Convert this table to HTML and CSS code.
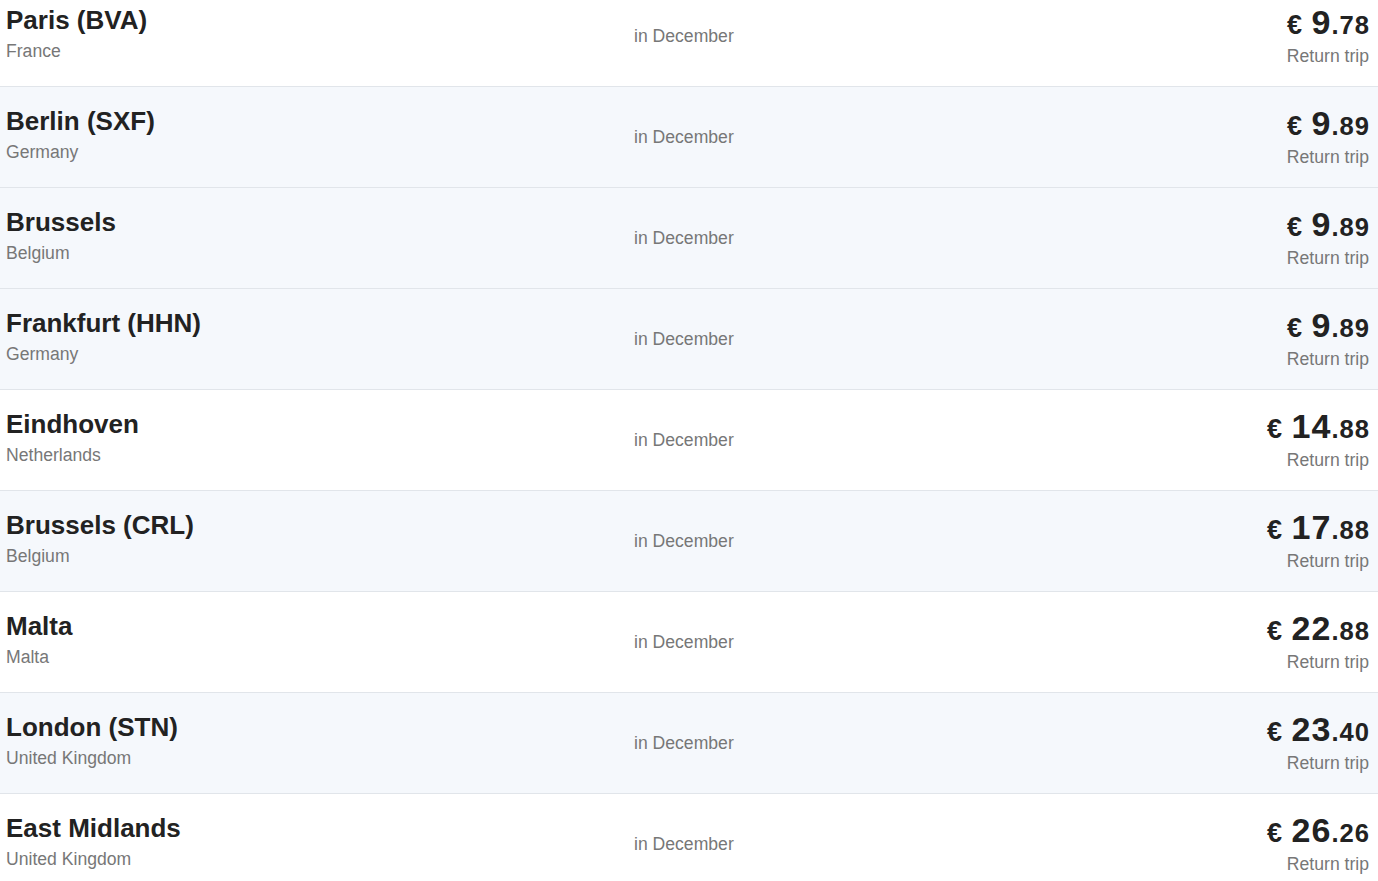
FILE: index.html
```html
<!DOCTYPE html>
<html lang="en">
<head>
<meta charset="utf-8">
<title>Cheap flights</title>
<link rel="stylesheet" href="styles.css">
</head>
<body>
<ul class="list">
  <li class="row">
    <div class="dest"><div class="city">Paris (BVA)</div><div class="country">France</div></div>
    <div class="when">in December</div>
    <div class="fare"><div class="price"><span class="cur">€ </span><span class="int">9</span><span class="dec">.78</span></div><div class="trip">Return trip</div></div>
  </li>
  <li class="row alt">
    <div class="dest"><div class="city">Berlin (SXF)</div><div class="country">Germany</div></div>
    <div class="when">in December</div>
    <div class="fare"><div class="price"><span class="cur">€ </span><span class="int">9</span><span class="dec">.89</span></div><div class="trip">Return trip</div></div>
  </li>
  <li class="row alt">
    <div class="dest"><div class="city">Brussels</div><div class="country">Belgium</div></div>
    <div class="when">in December</div>
    <div class="fare"><div class="price"><span class="cur">€ </span><span class="int">9</span><span class="dec">.89</span></div><div class="trip">Return trip</div></div>
  </li>
  <li class="row alt">
    <div class="dest"><div class="city">Frankfurt (HHN)</div><div class="country">Germany</div></div>
    <div class="when">in December</div>
    <div class="fare"><div class="price"><span class="cur">€ </span><span class="int">9</span><span class="dec">.89</span></div><div class="trip">Return trip</div></div>
  </li>
  <li class="row">
    <div class="dest"><div class="city">Eindhoven</div><div class="country">Netherlands</div></div>
    <div class="when">in December</div>
    <div class="fare"><div class="price"><span class="cur">€ </span><span class="int">14</span><span class="dec">.88</span></div><div class="trip">Return trip</div></div>
  </li>
  <li class="row alt">
    <div class="dest"><div class="city">Brussels (CRL)</div><div class="country">Belgium</div></div>
    <div class="when">in December</div>
    <div class="fare"><div class="price"><span class="cur">€ </span><span class="int">17</span><span class="dec">.88</span></div><div class="trip">Return trip</div></div>
  </li>
  <li class="row">
    <div class="dest"><div class="city">Malta</div><div class="country">Malta</div></div>
    <div class="when">in December</div>
    <div class="fare"><div class="price"><span class="cur">€ </span><span class="int">22</span><span class="dec">.88</span></div><div class="trip">Return trip</div></div>
  </li>
  <li class="row alt">
    <div class="dest"><div class="city">London (STN)</div><div class="country">United Kingdom</div></div>
    <div class="when">in December</div>
    <div class="fare"><div class="price"><span class="cur">€ </span><span class="int">23</span><span class="dec">.40</span></div><div class="trip">Return trip</div></div>
  </li>
  <li class="row">
    <div class="dest"><div class="city">East Midlands</div><div class="country">United Kingdom</div></div>
    <div class="when">in December</div>
    <div class="fare"><div class="price"><span class="cur">€ </span><span class="int">26</span><span class="dec">.26</span></div><div class="trip">Return trip</div></div>
  </li>
</ul>
</body>
</html>
```

FILE: styles.css
```css
html, body {
  margin: 0;
  padding: 0;
  background: #ffffff;
  font-family: "Liberation Sans", Arial, sans-serif;
  overflow: hidden;
}

.list {
  list-style: none;
  margin: -14px 0 0 0;
  padding: 0;
}

.row {
  display: grid;
  grid-template-columns: 628px 1fr auto;
  align-items: start;
  height: 100px;
  padding: 0 9px 0 6px;
  border-bottom: 1px solid #e1e5ea;
  background: #ffffff;
}

.row.alt {
  background: #f5f8fc;
}

.dest {
  padding-top: 20px;
}

.city {
  font-size: 26px;
  line-height: 29px;
  font-weight: bold;
  color: #222222;
}

.country {
  margin-top: 6px;
  font-size: 17.6px;
  line-height: 20px;
  color: #777777;
}

.when {
  align-self: center;
  font-size: 17.6px;
  line-height: 20px;
  color: #777777;
}

.fare {
  padding-top: 20px;
  text-align: right;
}

.price {
  font-size: 34px;
  line-height: 33px;
  font-weight: bold;
  color: #222222;
  white-space: nowrap;
  letter-spacing: 1px;
  margin-right: -1px;
}

.price .cur,
.price .dec {
  font-size: 25.6px;
  line-height: 25px;
}

.price .cur {
  font-size: 27px;
}

.trip {
  margin-top: 7px;
  font-size: 17.6px;
  line-height: 20px;
  color: #777777;
}
```
